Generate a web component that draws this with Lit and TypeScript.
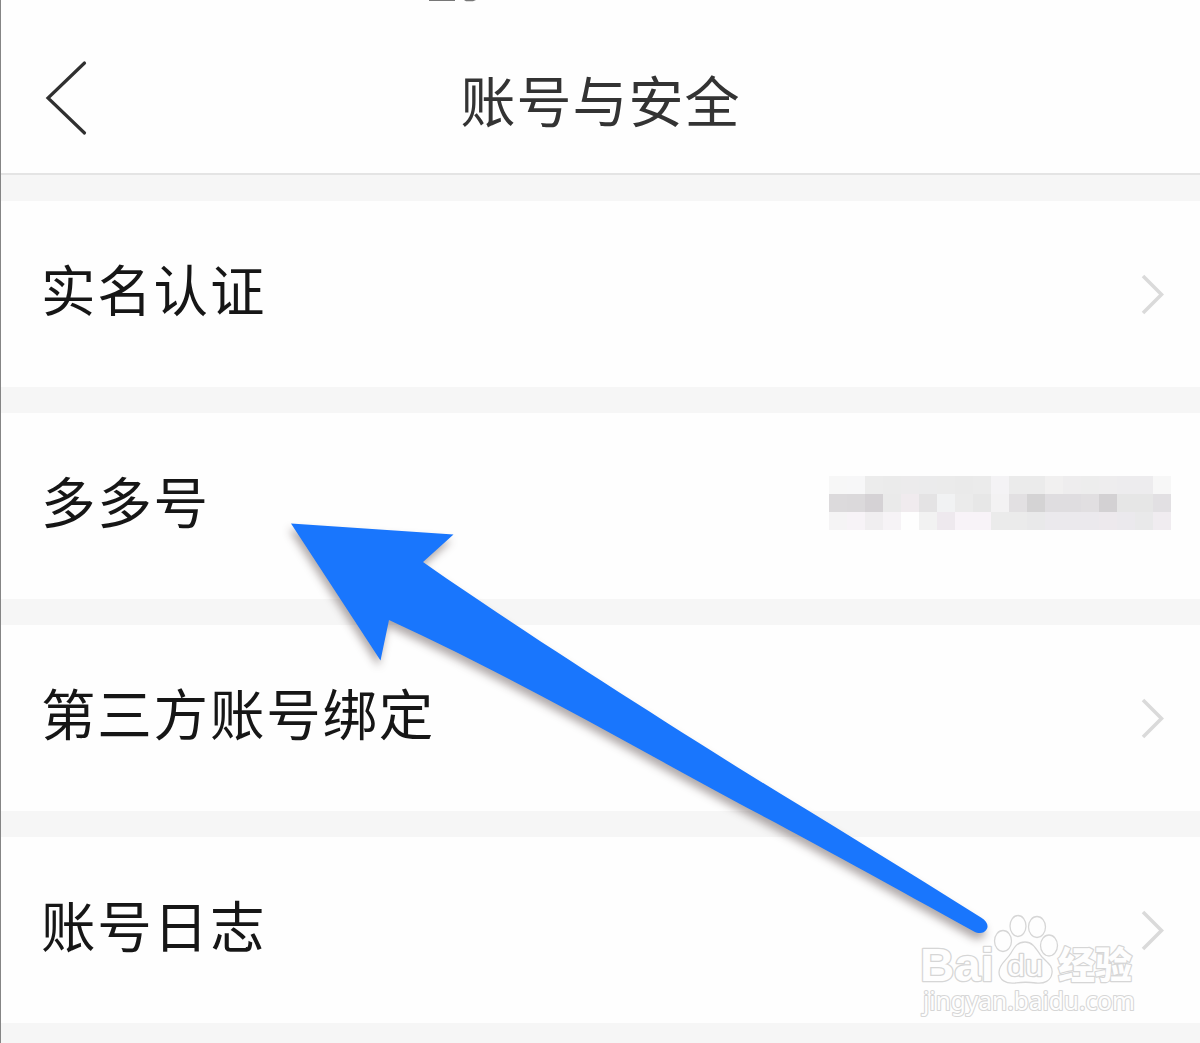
import { LitElement, css, html } from "lit";
import { customElement, property } from "lit/decorators.js";
import { classMap } from "lit/directives/class-map.js";

interface SettingsItem {
  label: string;
  masked?: boolean;
}

const ITEMS: SettingsItem[] = [
  { label: "实名认证" },
  { label: "多多号", masked: true },
  { label: "第三方账号绑定" },
  { label: "账号日志" },
];

// one line per row of blocks
const MOSAIC = [
  "f7f7f7 f7f7f8 ececec ebebeb ecebec ebebec ebebeb eaeaea ebebeb f4f3f5 ebebeb ebebeb f1f0f0 eeedee ededed eeedee edecee edecee f7f7f7",
  "dcdadc dbd9db d5d2d5 eaeaea f0ebee e4e3e4 f1f2f3 ebebeb e7e7e7 f3f2f3 e2e0e2 d4d3d4 dfdde0 dfdde0 e1dfe1 d3d1d3 e6e6e6 e6e6e6 e2e0e3",
  "f5f4f5 f7f3f7 f0eef0 f6f3f6 fefefe f2f2f2 eee9ee f8f3f8 f8f3f8 ebebeb ebebeb e9e9ea ebe9ed ebe9ed ebe9ed ede9ed ebe9ed e9e9ea f0ecf0",
].map((line) => line.split(" "));

@customElement("masked-value")
export class MaskedValue extends LitElement {
  static styles = css`
    :host {
      display: block;
    }

    .mosaic {
      display: grid;
      grid-template-columns: repeat(19, 18px);
      grid-auto-rows: 18px;
    }
  `;

  render() {
    return html`
      <div class="mosaic">
        ${MOSAIC.flat().map((color) => html`<span style="background:#${color}"></span>`)}
      </div>
    `;
  }
}

@customElement("settings-row")
export class SettingsRow extends LitElement {
  static styles = css`
    :host {
      display: block;
    }

    .row {
      display: flex;
      align-items: center;
      justify-content: space-between;
      box-sizing: border-box;
      height: 186px;
      padding-left: 40px;
      padding-right: 36px;
      background: #fefefe;
    }

    .row.masked {
      padding-right: 29px;
    }

    .label {
      margin-bottom: 12px;
      color: #161616;
      font-size: 54.5px;
      line-height: 80px;
      letter-spacing: 1.8px;
      white-space: nowrap;
    }

    .value {
      margin-bottom: 6px;
    }

    .chevron {
      display: block;
      width: 24px;
      height: 42px;
      fill: none;
      stroke: #dadada;
      stroke-width: 3.6;
    }
  `;

  @property({ type: String })
  label = "";

  @property({ type: Boolean })
  masked = false;

  render() {
    return html`
      <div class=${classMap({ row: true, masked: this.masked })}>
        <span class="label">${this.label}</span>
        ${this.masked
          ? html`<masked-value class="value"></masked-value>`
          : html`
              <svg class="chevron" viewBox="0 0 24 42">
                <path d="M3 3 L21.5 21.5 L3 40" />
              </svg>
            `}
      </div>
    `;
  }
}

@customElement("app-root")
export class AppRoot extends LitElement {
  static styles = css`
    :host {
      display: block;
      font-family: "Noto Sans CJK SC", sans-serif;
    }

    .screen {
      position: relative;
      box-sizing: border-box;
      height: 1043px;
      overflow: hidden;
      background: #f6f6f6;
      border-left: 1px solid #858585;
    }

    .header {
      display: grid;
      grid-template-columns: 200px 1fr 200px;
      align-items: center;
      box-sizing: border-box;
      height: 175px;
      padding-top: 24px;
      background: #fefefe;
      border-bottom: 2px solid #e4e4e4;
    }

    .back {
      display: block;
      width: 44px;
      height: 76px;
      margin-left: 43px;
      margin-bottom: 1px;
      fill: none;
      stroke: #303030;
      stroke-width: 3.2;
      stroke-linecap: round;
    }

    .title {
      margin: 0 0 2px;
      color: #333;
      font-size: 55px;
      font-weight: 400;
      line-height: 80px;
      letter-spacing: 1px;
      text-align: center;
    }

    .list {
      display: flex;
      flex-direction: column;
      gap: 26px;
      padding-top: 26px;
    }

    .overlay {
      position: absolute;
      top: 0;
      left: -1px;
      width: 1200px;
      height: 1043px;
    }

    .arrow {
      fill: #1976fd;
      filter: drop-shadow(-2px 6px 4px rgba(40, 20, 20, 0.36));
    }

    .status-edge {
      fill: #777;
    }

    .mark {
      fill: #fefefe;
      stroke: #d6d6d6;
      stroke-width: 1.3;
      stroke-linejoin: round;
    }

    .latin {
      font-family: "Liberation Sans", sans-serif;
      font-weight: 700;
      stroke-width: 2.6;
      paint-order: stroke;
    }

    .inner {
      font-weight: 400;
    }

    .domain {
      font-family: "Noto Sans", sans-serif;
      stroke-width: 2.2;
      paint-order: stroke;
    }

    .cjk {
      font-weight: 900;
      stroke-width: 2.4;
      paint-order: stroke;
    }
  `;

  render() {
    return html`
      <div class="screen">
        <header class="header">
          <svg class="back" viewBox="0 0 44 76">
            <path d="M40.5 3 L4 38 L40.5 73" />
          </svg>
          <h1 class="title">账号与安全</h1>
        </header>
        <main class="list">
          ${ITEMS.map(
            (item) => html`<settings-row .label=${item.label} .masked=${!!item.masked}></settings-row>`
          )}
        </main>
        <svg class="overlay" viewBox="0 0 1200 1043">
          <path class="status-edge" d="M429 0 H455 V1 H429 Z M464 0 H476 L473 1.3 H466 Z" />
          <path
            class="arrow"
            d="M291 523.5 L453.5 534.5 L423 562 C510 623 640 706 750 775 C830 824 905 870 981 917.5 C987 921 989 926 986.5 929.5 C984 933.5 979 934 974 931.5 C890 885 805 838 740 804 C620 739 505 673 389 620 L380.5 660.5 Z"
          />
          <g class="mark">
            <text class="latin" x="920" y="981" font-size="47" textLength="74" lengthAdjust="spacingAndGlyphs">Bai</text>
            <ellipse cx="1003" cy="941" rx="8.5" ry="10.5" />
            <ellipse cx="1018" cy="926" rx="8" ry="10.5" />
            <ellipse cx="1037" cy="927" rx="8.5" ry="10.5" />
            <ellipse cx="1049" cy="945.5" rx="8.5" ry="10.5" />
            <path d="M1025 942 C1034 942 1037 951 1042 957 C1048 963 1053 966 1052 973 C1051 981 1044 984 1036 983 C1029 982 1022 982 1015 983 C1006 984 999 980 999 972 C999 964 1007 960 1011 953 C1015 946 1018 942 1025 942 Z" />
            <text class="latin inner" x="1007" y="976" font-size="29" textLength="36" lengthAdjust="spacingAndGlyphs">du</text>
            <text class="cjk" x="1058" y="979" font-size="37">经验</text>
            <text class="domain" x="923" y="1010" font-size="25" textLength="212" lengthAdjust="spacingAndGlyphs">jingyan.baidu.com</text>
          </g>
        </svg>
      </div>
    `;
  }
}
